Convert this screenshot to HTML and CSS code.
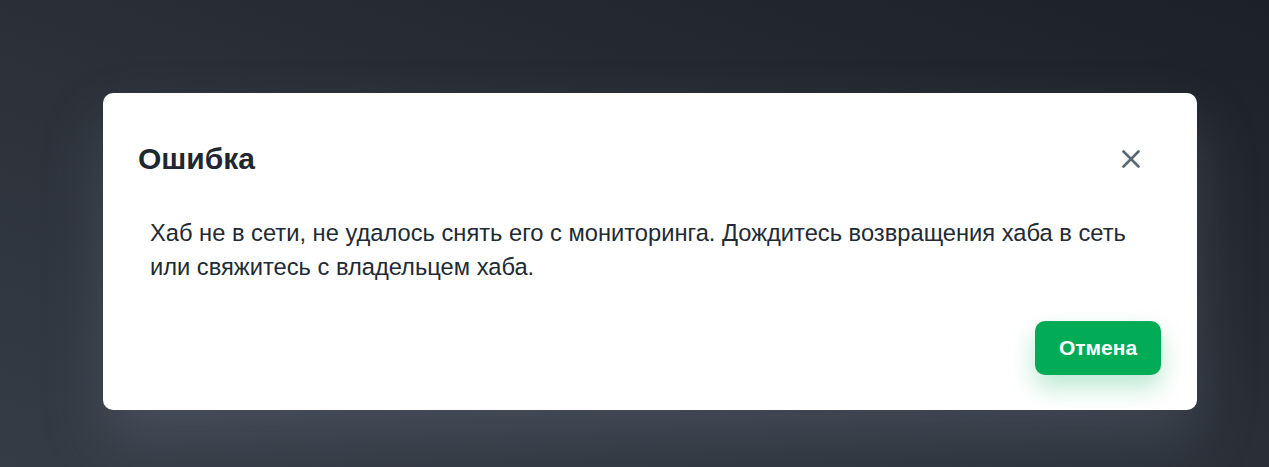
FILE: index.html
```html
<!DOCTYPE html>
<html lang="ru">
<head>
<meta charset="utf-8">
<link rel="stylesheet" href="styles.css">
</head>
<body>
<div class="overlay">
  <div class="modal">
    <div class="modal-header">
      <h2 class="modal-title">Ошибка</h2>
      <button class="close-btn" aria-label="Закрыть">
        <svg width="18" height="18" viewBox="0 0 18 18"><path d="M1.5 1.5 L16.5 16.5 M16.5 1.5 L1.5 16.5" stroke="#5b6773" stroke-width="2.6" stroke-linecap="round" fill="none"/></svg>
      </button>
    </div>
    <div class="modal-body">
      <p>Хаб не в сети, не удалось снять его с мониторинга. Дождитесь возвращения хаба в сеть или свяжитесь с владельцем хаба.</p>
    </div>
    <div class="modal-footer">
      <button class="btn-primary">Отмена</button>
    </div>
  </div>
</div>
</body>
</html>
```
FILE: styles.css
```css
html, body {
  margin: 0;
  height: 100%;
}
body {
  font-family: "Liberation Sans", Arial, sans-serif;
  background: linear-gradient(20deg, #363c46 0%, #2b3039 45%, #1c2028 100%);
  overflow: hidden;
}
.overlay {
  height: 100%;
  box-sizing: border-box;
  padding: 93px 72px 0 103px;
  display: flex;
  align-items: flex-start;
}
.modal {
  flex: 1;
  height: 317px;
  box-sizing: border-box;
  background: #fff;
  border-radius: 10px;
  padding: 0 36px 0 35px;
  display: flex;
  flex-direction: column;
  box-shadow: 0 30px 60px rgba(120, 130, 145, 0.3);
}
.modal-header {
  display: flex;
  align-items: center;
  justify-content: space-between;
  padding-top: 47px;
  height: 38px;
}
.modal-title {
  margin: 0;
  font-size: 30px;
  font-weight: 700;
  color: #1f2731;
}
.close-btn {
  background: none;
  border: 0;
  padding: 0;
  width: 18px;
  height: 18px;
  margin-right: 21px;
  display: flex;
  cursor: pointer;
}
.modal-body {
  padding: 38px 30px 0 12px;
}
.modal-body p {
  margin: 0;
  font-size: 23.7px;
  line-height: 34px;
  color: #222a33;
}
.modal-footer {
  margin-top: auto;
  padding-bottom: 35px;
  display: flex;
  justify-content: flex-end;
}
.btn-primary {
  height: 54px;
  width: 126px;
  border: 0;
  border-radius: 10px;
  background: #02ab56;
  color: #fff;
  font-family: "Liberation Sans", Arial, sans-serif;
  font-size: 21px;
  font-weight: 700;
  box-shadow: 0 12px 24px rgba(2, 171, 86, 0.28);
  cursor: pointer;
}
```
